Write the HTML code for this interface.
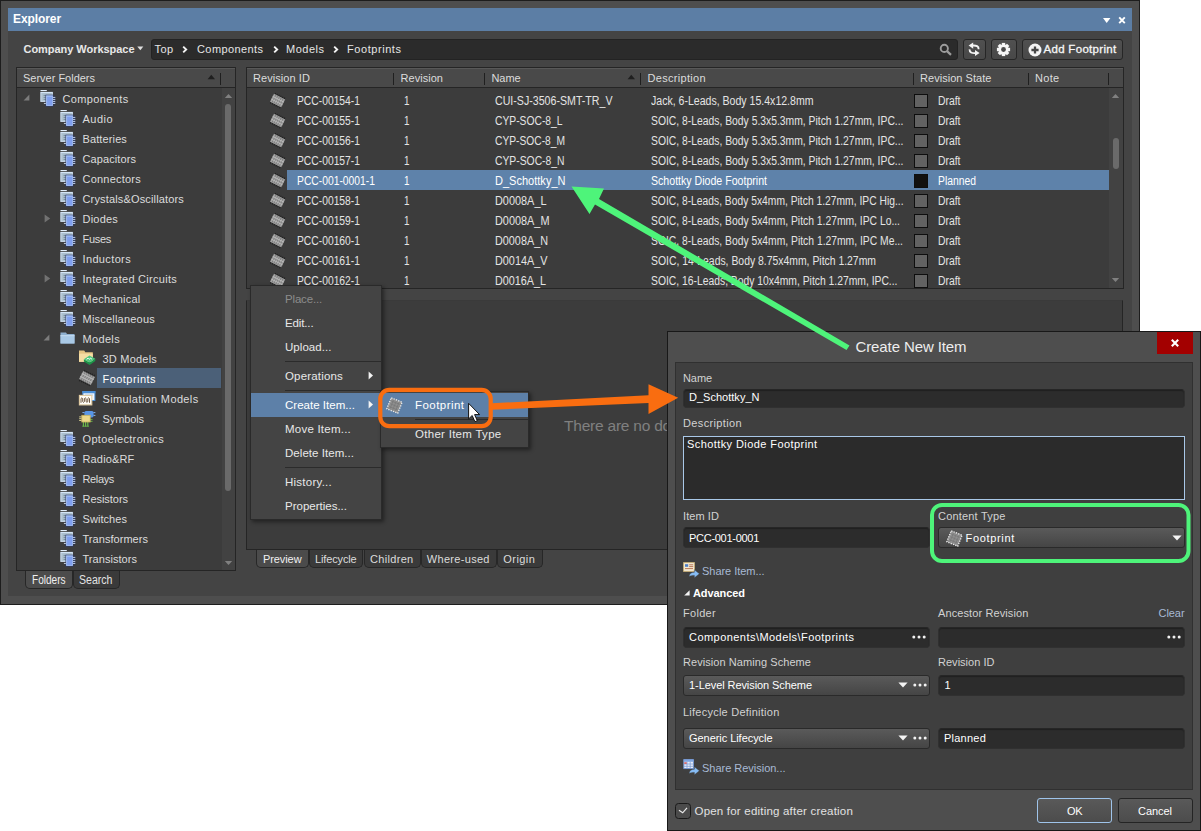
<!DOCTYPE html>
<html><head><meta charset="utf-8"><title>Explorer</title>
<style>
html,body{margin:0;padding:0;background:#fff;}
body{width:1201px;height:831px;position:relative;overflow:hidden;font-family:"Liberation Sans",sans-serif;font-size:12px;}
div{position:absolute;box-sizing:border-box;}
svg{position:absolute;overflow:visible;}
.t{white-space:nowrap;}
</style></head><body>
<div style="left:0px;top:0px;width:1140px;height:605px;background:#4e4e4e;border:1px solid #1d1d1d;"></div>
<div style="left:8px;top:8px;width:1124px;height:588px;background:#444444;"></div>
<div style="left:8px;top:8px;width:1124px;height:23px;background:#5c7ea5;"></div>
<div class="t" id="t1" style="left:13px;top:11px;line-height:16px;font-size:12px;color:#ffffff;font-weight:bold;letter-spacing:-0.086px;">Explorer</div>
<svg style="left:1101.5px;top:15.5px" width="26" height="10" viewBox="0 0 26 10"><path d="M1 2h7.4l-3.7 5z" fill="#fff"/><path d="M17.2 1.4l5.6 5.8M22.8 1.4l-5.6 5.8" stroke="#fff" stroke-width="1.9"/></svg>
<div class="t" id="t2" style="left:23.5px;top:41px;line-height:16px;font-size:11px;color:#e8e8e8;font-weight:bold;letter-spacing:-0.040px;">Company Workspace</div>
<svg style="left:137px;top:46px" width="7" height="5" viewBox="0 0 7 5"><path d="M0.3 0.6h6l-3 3.6z" fill="#e0e0e0"/></svg>
<div style="left:151px;top:39px;width:807px;height:21px;background:#2b2b2b;border:1px solid #232323;border-radius:3px;"></div>
<div class="t" id="t3" style="left:154.5px;top:41px;line-height:16px;font-size:11px;color:#e6e6e6;letter-spacing:0.417px;">Top</div>
<div class="t" id="t4" style="left:197px;top:41px;line-height:16px;font-size:11px;color:#e6e6e6;letter-spacing:0.412px;">Components</div>
<div class="t" id="t5" style="left:286px;top:41px;line-height:16px;font-size:11px;color:#e6e6e6;letter-spacing:0.505px;">Models</div>
<div class="t" id="t6" style="left:347px;top:41px;line-height:16px;font-size:11px;color:#e6e6e6;letter-spacing:0.558px;">Footprints</div>
<svg style="left:182px;top:45px" width="6" height="9" viewBox="0 0 6 9"><path d="M1.2 1.6l3 2.9l-3 2.9" fill="none" stroke="#f4f4f4" stroke-width="1.9"/></svg>
<svg style="left:272.5px;top:45px" width="6" height="9" viewBox="0 0 6 9"><path d="M1.2 1.6l3 2.9l-3 2.9" fill="none" stroke="#f4f4f4" stroke-width="1.9"/></svg>
<svg style="left:332.5px;top:45px" width="6" height="9" viewBox="0 0 6 9"><path d="M1.2 1.6l3 2.9l-3 2.9" fill="none" stroke="#f4f4f4" stroke-width="1.9"/></svg>
<svg style="left:939px;top:43px" width="14" height="14" viewBox="939 43 14 14"><circle cx="944.3" cy="48.4" r="3.6" fill="none" stroke="#9c9c9c" stroke-width="1.9"/><path d="M947 51.2l4 3.6" stroke="#9c9c9c" stroke-width="2.3"/></svg>
<div style="left:962.5px;top:39px;width:23px;height:21px;background:linear-gradient(#505050,#484848);border:1px solid #262626;border-radius:3px;"></div>
<div style="left:990.5px;top:39px;width:26.5px;height:21px;background:linear-gradient(#505050,#484848);border:1px solid #262626;border-radius:3px;"></div>
<div style="left:1021.5px;top:39px;width:101.5px;height:21px;background:linear-gradient(#505050,#484848);border:1px solid #262626;border-radius:3px;"></div>
<svg style="left:966px;top:41px" width="16" height="16" viewBox="966 41 16 16"><path d="M978.6 49.2C978.8 46.3 976.4 45.2 972.6 45.5" fill="none" stroke="#f4f4f4" stroke-width="1.9"/><path d="M968.6 45.6l4.6-3.1v6.2z" fill="#f4f4f4"/><path d="M969.6 49.4C969.4 52.3 971.8 53.4 975.6 53.1" fill="none" stroke="#f4f4f4" stroke-width="1.9"/><path d="M979.6 53l-4.6-3.1v6.2z" fill="#f4f4f4"/></svg>
<svg style="left:996px;top:42px" width="15" height="15" viewBox="-7.5 -7.5 15 15"><g fill="#f6f6f6"><circle r="5.2"/><rect x="-1.7" y="-6.6" width="3.4" height="13.2" transform="rotate(0)"/><rect x="-1.7" y="-6.6" width="3.4" height="13.2" transform="rotate(45)"/><rect x="-1.7" y="-6.6" width="3.4" height="13.2" transform="rotate(90)"/><rect x="-1.7" y="-6.6" width="3.4" height="13.2" transform="rotate(135)"/></g><circle r="2.4" fill="#4a4a4a"/></svg>
<svg style="left:1027.5px;top:42.5px" width="14" height="14" viewBox="0 0 14 14"><circle cx="7" cy="7" r="6.5" fill="#f4f4f4"/><path d="M7 3.4v7.2M3.4 7h7.2" stroke="#474747" stroke-width="2.3"/></svg>
<div class="t" id="t7" style="left:1043.5px;top:41px;line-height:16px;font-size:11.5px;color:#f6f6f6;letter-spacing:0.304px;-webkit-text-stroke:0.3px #f6f6f6;">Add Footprint</div>
<div style="left:16px;top:67px;width:220px;height:504px;background:#3c3c3c;border:1px solid #252525;"></div>
<div style="left:17px;top:68px;width:218px;height:20px;background:#494949;border-bottom:1px solid #252525;border-top:1px solid #585858;"></div>
<div style="left:222px;top:88px;width:13px;height:482px;background:#424242;"></div>
<div class="t" id="t8" style="left:23px;top:70px;line-height:16px;font-size:11px;color:#dcdcdc;letter-spacing:-0.010px;">Server Folders</div>
<svg style="left:207px;top:74px" width="9" height="6" viewBox="0 0 9 6"><path d="M0.6 5.2h7.4l-3.7-4.4z" fill="#1f1f1f"/></svg>
<div style="left:220px;top:72.5px;width:1px;height:12px;background:#1f1f1f;"></div>
<div style="left:225px;top:104px;width:6px;height:387px;background:#6a6a6a;border-radius:3px;"></div>
<svg style="left:224px;top:93px" width="9" height="6" viewBox="0 0 9 6"><path d="M0.8 5h7.4l-3.7-4z" fill="#808080"/></svg>
<svg style="left:224px;top:560px" width="9" height="6" viewBox="0 0 9 6"><path d="M0.8 1h7.4l-3.7 4z" fill="#808080"/></svg>
<div style="left:97px;top:368px;width:124px;height:20px;background:#4b6078;"></div>
<svg style="left:23.2px;top:93.8px" width="7" height="7" viewBox="0 0 7 7"><path d="M6.4 0.6v5.8h-5.8z" fill="#7c7c7c"/></svg>
<svg style="left:40px;top:90px" width="16" height="17" viewBox="0 0 16 17"><path d="M0.5 0h6.3v1.1h-6.3z" fill="#e2eefb"/><path d="M0.3 1.9h12.6v10h-12.6z" fill="#d3e4f6"/><rect x="1.3" y="3" width="10.6" height="7.9" fill="#adc1cf"/><path d="M3.6 5.4h2.2M3.6 7.4h2.2M3.6 9.4h2.2" stroke="#6f8394" stroke-width="0.9"/><rect x="5.5" y="4.7" width="7.9" height="11.8" fill="#2c3a6a"/><rect x="12.9" y="6.4" width="2.3" height="8" fill="#27335c"/><path d="M13 7.4h2.3M13 9.4h2.3M13 11.4h2.3M13 13.4h2.3M3.9 13.4h2" stroke="#d5e2f6" stroke-width="0.9"/><rect x="6.1" y="5.3" width="6.8" height="10.6" fill="#a9c5f8"/><rect x="7.1" y="6.6" width="5" height="8.5" fill="#7f9fee"/></svg>
<div class="t" id="t9" style="left:62.5px;top:91px;line-height:16px;font-size:11px;color:#dcdcdc;letter-spacing:0.362px;">Components</div>
<svg style="left:60px;top:110px" width="16" height="17" viewBox="0 0 16 17"><path d="M0.5 0h6.3v1.1h-6.3z" fill="#e2eefb"/><path d="M0.3 1.9h12.6v10h-12.6z" fill="#d3e4f6"/><rect x="1.3" y="3" width="10.6" height="7.9" fill="#adc1cf"/><path d="M3.6 5.4h2.2M3.6 7.4h2.2M3.6 9.4h2.2" stroke="#6f8394" stroke-width="0.9"/><rect x="5.5" y="4.7" width="7.9" height="11.8" fill="#2c3a6a"/><rect x="12.9" y="6.4" width="2.3" height="8" fill="#27335c"/><path d="M13 7.4h2.3M13 9.4h2.3M13 11.4h2.3M13 13.4h2.3M3.9 13.4h2" stroke="#d5e2f6" stroke-width="0.9"/><rect x="6.1" y="5.3" width="6.8" height="10.6" fill="#a9c5f8"/><rect x="7.1" y="6.6" width="5" height="8.5" fill="#7f9fee"/></svg>
<div class="t" id="t10" style="left:82.5px;top:111px;line-height:16px;font-size:11px;color:#dcdcdc;letter-spacing:0.472px;">Audio</div>
<svg style="left:60px;top:130px" width="16" height="17" viewBox="0 0 16 17"><path d="M0.5 0h6.3v1.1h-6.3z" fill="#e2eefb"/><path d="M0.3 1.9h12.6v10h-12.6z" fill="#d3e4f6"/><rect x="1.3" y="3" width="10.6" height="7.9" fill="#adc1cf"/><path d="M3.6 5.4h2.2M3.6 7.4h2.2M3.6 9.4h2.2" stroke="#6f8394" stroke-width="0.9"/><rect x="5.5" y="4.7" width="7.9" height="11.8" fill="#2c3a6a"/><rect x="12.9" y="6.4" width="2.3" height="8" fill="#27335c"/><path d="M13 7.4h2.3M13 9.4h2.3M13 11.4h2.3M13 13.4h2.3M3.9 13.4h2" stroke="#d5e2f6" stroke-width="0.9"/><rect x="6.1" y="5.3" width="6.8" height="10.6" fill="#a9c5f8"/><rect x="7.1" y="6.6" width="5" height="8.5" fill="#7f9fee"/></svg>
<div class="t" id="t11" style="left:82.5px;top:131px;line-height:16px;font-size:11px;color:#dcdcdc;letter-spacing:0.120px;">Batteries</div>
<svg style="left:60px;top:150px" width="16" height="17" viewBox="0 0 16 17"><path d="M0.5 0h6.3v1.1h-6.3z" fill="#e2eefb"/><path d="M0.3 1.9h12.6v10h-12.6z" fill="#d3e4f6"/><rect x="1.3" y="3" width="10.6" height="7.9" fill="#adc1cf"/><path d="M3.6 5.4h2.2M3.6 7.4h2.2M3.6 9.4h2.2" stroke="#6f8394" stroke-width="0.9"/><rect x="5.5" y="4.7" width="7.9" height="11.8" fill="#2c3a6a"/><rect x="12.9" y="6.4" width="2.3" height="8" fill="#27335c"/><path d="M13 7.4h2.3M13 9.4h2.3M13 11.4h2.3M13 13.4h2.3M3.9 13.4h2" stroke="#d5e2f6" stroke-width="0.9"/><rect x="6.1" y="5.3" width="6.8" height="10.6" fill="#a9c5f8"/><rect x="7.1" y="6.6" width="5" height="8.5" fill="#7f9fee"/></svg>
<div class="t" id="t12" style="left:82.5px;top:151px;line-height:16px;font-size:11px;color:#dcdcdc;letter-spacing:0.092px;">Capacitors</div>
<svg style="left:60px;top:170px" width="16" height="17" viewBox="0 0 16 17"><path d="M0.5 0h6.3v1.1h-6.3z" fill="#e2eefb"/><path d="M0.3 1.9h12.6v10h-12.6z" fill="#d3e4f6"/><rect x="1.3" y="3" width="10.6" height="7.9" fill="#adc1cf"/><path d="M3.6 5.4h2.2M3.6 7.4h2.2M3.6 9.4h2.2" stroke="#6f8394" stroke-width="0.9"/><rect x="5.5" y="4.7" width="7.9" height="11.8" fill="#2c3a6a"/><rect x="12.9" y="6.4" width="2.3" height="8" fill="#27335c"/><path d="M13 7.4h2.3M13 9.4h2.3M13 11.4h2.3M13 13.4h2.3M3.9 13.4h2" stroke="#d5e2f6" stroke-width="0.9"/><rect x="6.1" y="5.3" width="6.8" height="10.6" fill="#a9c5f8"/><rect x="7.1" y="6.6" width="5" height="8.5" fill="#7f9fee"/></svg>
<div class="t" id="t13" style="left:82.5px;top:171px;line-height:16px;font-size:11px;color:#dcdcdc;letter-spacing:0.223px;">Connectors</div>
<svg style="left:60px;top:190px" width="16" height="17" viewBox="0 0 16 17"><path d="M0.5 0h6.3v1.1h-6.3z" fill="#e2eefb"/><path d="M0.3 1.9h12.6v10h-12.6z" fill="#d3e4f6"/><rect x="1.3" y="3" width="10.6" height="7.9" fill="#adc1cf"/><path d="M3.6 5.4h2.2M3.6 7.4h2.2M3.6 9.4h2.2" stroke="#6f8394" stroke-width="0.9"/><rect x="5.5" y="4.7" width="7.9" height="11.8" fill="#2c3a6a"/><rect x="12.9" y="6.4" width="2.3" height="8" fill="#27335c"/><path d="M13 7.4h2.3M13 9.4h2.3M13 11.4h2.3M13 13.4h2.3M3.9 13.4h2" stroke="#d5e2f6" stroke-width="0.9"/><rect x="6.1" y="5.3" width="6.8" height="10.6" fill="#a9c5f8"/><rect x="7.1" y="6.6" width="5" height="8.5" fill="#7f9fee"/></svg>
<div class="t" id="t14" style="left:82.5px;top:191px;line-height:16px;font-size:11px;color:#dcdcdc;letter-spacing:0.155px;">Crystals&amp;Oscillators</div>
<svg style="left:43.5px;top:214px" width="7" height="9" viewBox="0 0 7 9"><path d="M0.6 0.5l5.6 4l-5.6 4z" fill="#717171"/></svg>
<svg style="left:60px;top:210px" width="16" height="17" viewBox="0 0 16 17"><path d="M0.5 0h6.3v1.1h-6.3z" fill="#e2eefb"/><path d="M0.3 1.9h12.6v10h-12.6z" fill="#d3e4f6"/><rect x="1.3" y="3" width="10.6" height="7.9" fill="#adc1cf"/><path d="M3.6 5.4h2.2M3.6 7.4h2.2M3.6 9.4h2.2" stroke="#6f8394" stroke-width="0.9"/><rect x="5.5" y="4.7" width="7.9" height="11.8" fill="#2c3a6a"/><rect x="12.9" y="6.4" width="2.3" height="8" fill="#27335c"/><path d="M13 7.4h2.3M13 9.4h2.3M13 11.4h2.3M13 13.4h2.3M3.9 13.4h2" stroke="#d5e2f6" stroke-width="0.9"/><rect x="6.1" y="5.3" width="6.8" height="10.6" fill="#a9c5f8"/><rect x="7.1" y="6.6" width="5" height="8.5" fill="#7f9fee"/></svg>
<div class="t" id="t15" style="left:82.5px;top:211px;line-height:16px;font-size:11px;color:#dcdcdc;letter-spacing:0.208px;">Diodes</div>
<svg style="left:60px;top:230px" width="16" height="17" viewBox="0 0 16 17"><path d="M0.5 0h6.3v1.1h-6.3z" fill="#e2eefb"/><path d="M0.3 1.9h12.6v10h-12.6z" fill="#d3e4f6"/><rect x="1.3" y="3" width="10.6" height="7.9" fill="#adc1cf"/><path d="M3.6 5.4h2.2M3.6 7.4h2.2M3.6 9.4h2.2" stroke="#6f8394" stroke-width="0.9"/><rect x="5.5" y="4.7" width="7.9" height="11.8" fill="#2c3a6a"/><rect x="12.9" y="6.4" width="2.3" height="8" fill="#27335c"/><path d="M13 7.4h2.3M13 9.4h2.3M13 11.4h2.3M13 13.4h2.3M3.9 13.4h2" stroke="#d5e2f6" stroke-width="0.9"/><rect x="6.1" y="5.3" width="6.8" height="10.6" fill="#a9c5f8"/><rect x="7.1" y="6.6" width="5" height="8.5" fill="#7f9fee"/></svg>
<div class="t" id="t16" style="left:82.5px;top:231px;line-height:16px;font-size:11px;color:#dcdcdc;letter-spacing:-0.294px;">Fuses</div>
<svg style="left:60px;top:250px" width="16" height="17" viewBox="0 0 16 17"><path d="M0.5 0h6.3v1.1h-6.3z" fill="#e2eefb"/><path d="M0.3 1.9h12.6v10h-12.6z" fill="#d3e4f6"/><rect x="1.3" y="3" width="10.6" height="7.9" fill="#adc1cf"/><path d="M3.6 5.4h2.2M3.6 7.4h2.2M3.6 9.4h2.2" stroke="#6f8394" stroke-width="0.9"/><rect x="5.5" y="4.7" width="7.9" height="11.8" fill="#2c3a6a"/><rect x="12.9" y="6.4" width="2.3" height="8" fill="#27335c"/><path d="M13 7.4h2.3M13 9.4h2.3M13 11.4h2.3M13 13.4h2.3M3.9 13.4h2" stroke="#d5e2f6" stroke-width="0.9"/><rect x="6.1" y="5.3" width="6.8" height="10.6" fill="#a9c5f8"/><rect x="7.1" y="6.6" width="5" height="8.5" fill="#7f9fee"/></svg>
<div class="t" id="t17" style="left:82.5px;top:251px;line-height:16px;font-size:11px;color:#dcdcdc;letter-spacing:0.361px;">Inductors</div>
<svg style="left:43.5px;top:274px" width="7" height="9" viewBox="0 0 7 9"><path d="M0.6 0.5l5.6 4l-5.6 4z" fill="#717171"/></svg>
<svg style="left:60px;top:270px" width="16" height="17" viewBox="0 0 16 17"><path d="M0.5 0h6.3v1.1h-6.3z" fill="#e2eefb"/><path d="M0.3 1.9h12.6v10h-12.6z" fill="#d3e4f6"/><rect x="1.3" y="3" width="10.6" height="7.9" fill="#adc1cf"/><path d="M3.6 5.4h2.2M3.6 7.4h2.2M3.6 9.4h2.2" stroke="#6f8394" stroke-width="0.9"/><rect x="5.5" y="4.7" width="7.9" height="11.8" fill="#2c3a6a"/><rect x="12.9" y="6.4" width="2.3" height="8" fill="#27335c"/><path d="M13 7.4h2.3M13 9.4h2.3M13 11.4h2.3M13 13.4h2.3M3.9 13.4h2" stroke="#d5e2f6" stroke-width="0.9"/><rect x="6.1" y="5.3" width="6.8" height="10.6" fill="#a9c5f8"/><rect x="7.1" y="6.6" width="5" height="8.5" fill="#7f9fee"/></svg>
<div class="t" id="t18" style="left:82.5px;top:271px;line-height:16px;font-size:11px;color:#dcdcdc;letter-spacing:0.275px;">Integrated Circuits</div>
<svg style="left:60px;top:290px" width="16" height="17" viewBox="0 0 16 17"><path d="M0.5 0h6.3v1.1h-6.3z" fill="#e2eefb"/><path d="M0.3 1.9h12.6v10h-12.6z" fill="#d3e4f6"/><rect x="1.3" y="3" width="10.6" height="7.9" fill="#adc1cf"/><path d="M3.6 5.4h2.2M3.6 7.4h2.2M3.6 9.4h2.2" stroke="#6f8394" stroke-width="0.9"/><rect x="5.5" y="4.7" width="7.9" height="11.8" fill="#2c3a6a"/><rect x="12.9" y="6.4" width="2.3" height="8" fill="#27335c"/><path d="M13 7.4h2.3M13 9.4h2.3M13 11.4h2.3M13 13.4h2.3M3.9 13.4h2" stroke="#d5e2f6" stroke-width="0.9"/><rect x="6.1" y="5.3" width="6.8" height="10.6" fill="#a9c5f8"/><rect x="7.1" y="6.6" width="5" height="8.5" fill="#7f9fee"/></svg>
<div class="t" id="t19" style="left:82.5px;top:291px;line-height:16px;font-size:11px;color:#dcdcdc;letter-spacing:0.236px;">Mechanical</div>
<svg style="left:60px;top:310px" width="16" height="17" viewBox="0 0 16 17"><path d="M0.5 0h6.3v1.1h-6.3z" fill="#e2eefb"/><path d="M0.3 1.9h12.6v10h-12.6z" fill="#d3e4f6"/><rect x="1.3" y="3" width="10.6" height="7.9" fill="#adc1cf"/><path d="M3.6 5.4h2.2M3.6 7.4h2.2M3.6 9.4h2.2" stroke="#6f8394" stroke-width="0.9"/><rect x="5.5" y="4.7" width="7.9" height="11.8" fill="#2c3a6a"/><rect x="12.9" y="6.4" width="2.3" height="8" fill="#27335c"/><path d="M13 7.4h2.3M13 9.4h2.3M13 11.4h2.3M13 13.4h2.3M3.9 13.4h2" stroke="#d5e2f6" stroke-width="0.9"/><rect x="6.1" y="5.3" width="6.8" height="10.6" fill="#a9c5f8"/><rect x="7.1" y="6.6" width="5" height="8.5" fill="#7f9fee"/></svg>
<div class="t" id="t20" style="left:82.5px;top:311px;line-height:16px;font-size:11px;color:#dcdcdc;letter-spacing:0.215px;">Miscellaneous</div>
<svg style="left:43.2px;top:333.8px" width="7" height="7" viewBox="0 0 7 7"><path d="M6.4 0.6v5.8h-5.8z" fill="#7c7c7c"/></svg>
<svg style="left:60px;top:330px" width="16" height="17" viewBox="0 0 16 17"><path d="M0.5 2.5h5.5l1 1.5h7.5v9.5h-14z" fill="#8fb0cf"/><path d="M0.5 5.2h14v8.3h-14z" fill="#a9c9e6"/><path d="M0.5 5.2h14v1h-14z" fill="#c6dcf0"/></svg>
<div class="t" id="t21" style="left:82.5px;top:331px;line-height:16px;font-size:11px;color:#dcdcdc;letter-spacing:0.339px;">Models</div>
<svg style="left:79px;top:350px" width="18" height="16" viewBox="0 0 18 16"><path d="M0 0.6h5.2l1.1 1.7h7.5v9.5h-13.8z" fill="#e6c584"/><path d="M0 3.6h13.8v8.2h-13.8z" fill="#f5dda4"/><path d="M4.9 9.2L10.6 12.6L16.3 8.8v2.3L10.6 15L4.9 11.4z" fill="#1c9448"/><path d="M4.9 9.2L10.5 5.5L16.3 8.8L10.6 12.6z" fill="#4fc67e"/><path d="M7.6 9.3l1.5-1.1l1.1 1.1l1.5-1.1l1.2 1" fill="none" stroke="#fff" stroke-width="1"/></svg>
<div class="t" id="t22" style="left:102.5px;top:351px;line-height:16px;font-size:11px;color:#dcdcdc;letter-spacing:0.214px;">3D Models</div>
<svg style="left:79.3px;top:370px" width="16" height="16" viewBox="0 0 16 16"><g transform="rotate(27 8 8)"><path d="M2.6 1.7v12.6M4.8 1.7v12.6M6.9 1.7v12.6M9.1 1.7v12.6M11.2 1.7v12.6M13.4 1.7v12.6" stroke="#222" stroke-width="1.1"/><rect x="1.4" y="3.4" width="13.2" height="9.2" fill="#a2a2a2"/><path d="M3.7 3.6v8.8M5.85 3.6v8.8M8 3.6v8.8M10.15 3.6v8.8M12.3 3.6v8.8" stroke="#7c7c7c" stroke-width="0.9"/><path d="M1.4 6.4h13.2M1.4 9.6h13.2" stroke="#bdbdbd" stroke-width="0.9"/></g></svg>
<div class="t" id="t23" style="left:102.5px;top:371px;line-height:16px;font-size:11px;color:#ffffff;letter-spacing:0.458px;">Footprints</div>
<svg style="left:79px;top:391px" width="18" height="16" viewBox="0 0 18 16"><rect x="3.9" y="0.5" width="12" height="9" fill="#f2f7fd" stroke="#4a8fd8" stroke-width="1"/><rect x="3.4" y="0" width="13" height="2.3" fill="#4a8fd8"/><path d="M6 4h8" stroke="#9cc2ec" stroke-width="0.9"/><rect x="0.4" y="4.4" width="12.4" height="9.5" fill="#fffdf7" stroke="#e2cca2" stroke-width="1.1"/><path d="M2 11.8V7.6q0.85-1.5 1.7 0V10.6q0.85 1.5 1.7 0V7.6q0.85-1.5 1.7 0V10.6q0.85 1.5 1.7 0V7.6q0.85-1.5 1.7 0V11.8" fill="none" stroke="#4e3218" stroke-width="0.8"/></svg>
<div class="t" id="t24" style="left:102.5px;top:391px;line-height:16px;font-size:11px;color:#dcdcdc;letter-spacing:0.360px;">Simulation Models</div>
<svg style="left:79px;top:410.5px" width="18" height="17" viewBox="0 0 18 17"><path d="M3.4 1.6h2.2M14.4 1.6h2M14.4 4.4h2" stroke="#86b4ee" stroke-width="1"/><rect x="5.4" y="0" width="9.2" height="6.4" rx="1.6" fill="#5896e6"/><path d="M0.2 5.9h2.6M0.2 7.7h2.6M0.2 9.5h2.6" stroke="#e6dc9a" stroke-width="0.9"/><path d="M11.2 8.4h2.3M11.2 10.3h2.3" stroke="#6cc04a" stroke-width="0.9"/><path d="M4.4 11v4.4M6.6 11v4.4M8.8 11v4.4" stroke="#6cc04a" stroke-width="1.1"/><path d="M3.2 15.2h6.8" stroke="#6cc04a" stroke-width="0.8"/><rect x="2.8" y="4.3" width="8.4" height="6.7" fill="#ecd98a" stroke="#c8b25a" stroke-width="0.8"/></svg>
<div class="t" id="t25" style="left:102.5px;top:411px;line-height:16px;font-size:11px;color:#dcdcdc;letter-spacing:-0.098px;">Symbols</div>
<svg style="left:60px;top:430px" width="16" height="17" viewBox="0 0 16 17"><path d="M0.5 0h6.3v1.1h-6.3z" fill="#e2eefb"/><path d="M0.3 1.9h12.6v10h-12.6z" fill="#d3e4f6"/><rect x="1.3" y="3" width="10.6" height="7.9" fill="#adc1cf"/><path d="M3.6 5.4h2.2M3.6 7.4h2.2M3.6 9.4h2.2" stroke="#6f8394" stroke-width="0.9"/><rect x="5.5" y="4.7" width="7.9" height="11.8" fill="#2c3a6a"/><rect x="12.9" y="6.4" width="2.3" height="8" fill="#27335c"/><path d="M13 7.4h2.3M13 9.4h2.3M13 11.4h2.3M13 13.4h2.3M3.9 13.4h2" stroke="#d5e2f6" stroke-width="0.9"/><rect x="6.1" y="5.3" width="6.8" height="10.6" fill="#a9c5f8"/><rect x="7.1" y="6.6" width="5" height="8.5" fill="#7f9fee"/></svg>
<div class="t" id="t26" style="left:82.5px;top:431px;line-height:16px;font-size:11px;color:#dcdcdc;letter-spacing:0.338px;">Optoelectronics</div>
<svg style="left:60px;top:450px" width="16" height="17" viewBox="0 0 16 17"><path d="M0.5 0h6.3v1.1h-6.3z" fill="#e2eefb"/><path d="M0.3 1.9h12.6v10h-12.6z" fill="#d3e4f6"/><rect x="1.3" y="3" width="10.6" height="7.9" fill="#adc1cf"/><path d="M3.6 5.4h2.2M3.6 7.4h2.2M3.6 9.4h2.2" stroke="#6f8394" stroke-width="0.9"/><rect x="5.5" y="4.7" width="7.9" height="11.8" fill="#2c3a6a"/><rect x="12.9" y="6.4" width="2.3" height="8" fill="#27335c"/><path d="M13 7.4h2.3M13 9.4h2.3M13 11.4h2.3M13 13.4h2.3M3.9 13.4h2" stroke="#d5e2f6" stroke-width="0.9"/><rect x="6.1" y="5.3" width="6.8" height="10.6" fill="#a9c5f8"/><rect x="7.1" y="6.6" width="5" height="8.5" fill="#7f9fee"/></svg>
<div class="t" id="t27" style="left:82.5px;top:451px;line-height:16px;font-size:11px;color:#dcdcdc;letter-spacing:0.156px;">Radio&amp;RF</div>
<svg style="left:60px;top:470px" width="16" height="17" viewBox="0 0 16 17"><path d="M0.5 0h6.3v1.1h-6.3z" fill="#e2eefb"/><path d="M0.3 1.9h12.6v10h-12.6z" fill="#d3e4f6"/><rect x="1.3" y="3" width="10.6" height="7.9" fill="#adc1cf"/><path d="M3.6 5.4h2.2M3.6 7.4h2.2M3.6 9.4h2.2" stroke="#6f8394" stroke-width="0.9"/><rect x="5.5" y="4.7" width="7.9" height="11.8" fill="#2c3a6a"/><rect x="12.9" y="6.4" width="2.3" height="8" fill="#27335c"/><path d="M13 7.4h2.3M13 9.4h2.3M13 11.4h2.3M13 13.4h2.3M3.9 13.4h2" stroke="#d5e2f6" stroke-width="0.9"/><rect x="6.1" y="5.3" width="6.8" height="10.6" fill="#a9c5f8"/><rect x="7.1" y="6.6" width="5" height="8.5" fill="#7f9fee"/></svg>
<div class="t" id="t28" style="left:82.5px;top:471px;line-height:16px;font-size:11px;color:#dcdcdc;letter-spacing:-0.354px;">Relays</div>
<svg style="left:60px;top:490px" width="16" height="17" viewBox="0 0 16 17"><path d="M0.5 0h6.3v1.1h-6.3z" fill="#e2eefb"/><path d="M0.3 1.9h12.6v10h-12.6z" fill="#d3e4f6"/><rect x="1.3" y="3" width="10.6" height="7.9" fill="#adc1cf"/><path d="M3.6 5.4h2.2M3.6 7.4h2.2M3.6 9.4h2.2" stroke="#6f8394" stroke-width="0.9"/><rect x="5.5" y="4.7" width="7.9" height="11.8" fill="#2c3a6a"/><rect x="12.9" y="6.4" width="2.3" height="8" fill="#27335c"/><path d="M13 7.4h2.3M13 9.4h2.3M13 11.4h2.3M13 13.4h2.3M3.9 13.4h2" stroke="#d5e2f6" stroke-width="0.9"/><rect x="6.1" y="5.3" width="6.8" height="10.6" fill="#a9c5f8"/><rect x="7.1" y="6.6" width="5" height="8.5" fill="#7f9fee"/></svg>
<div class="t" id="t29" style="left:82.5px;top:491px;line-height:16px;font-size:11px;color:#dcdcdc;letter-spacing:-0.038px;">Resistors</div>
<svg style="left:60px;top:510px" width="16" height="17" viewBox="0 0 16 17"><path d="M0.5 0h6.3v1.1h-6.3z" fill="#e2eefb"/><path d="M0.3 1.9h12.6v10h-12.6z" fill="#d3e4f6"/><rect x="1.3" y="3" width="10.6" height="7.9" fill="#adc1cf"/><path d="M3.6 5.4h2.2M3.6 7.4h2.2M3.6 9.4h2.2" stroke="#6f8394" stroke-width="0.9"/><rect x="5.5" y="4.7" width="7.9" height="11.8" fill="#2c3a6a"/><rect x="12.9" y="6.4" width="2.3" height="8" fill="#27335c"/><path d="M13 7.4h2.3M13 9.4h2.3M13 11.4h2.3M13 13.4h2.3M3.9 13.4h2" stroke="#d5e2f6" stroke-width="0.9"/><rect x="6.1" y="5.3" width="6.8" height="10.6" fill="#a9c5f8"/><rect x="7.1" y="6.6" width="5" height="8.5" fill="#7f9fee"/></svg>
<div class="t" id="t30" style="left:82.5px;top:511px;line-height:16px;font-size:11px;color:#dcdcdc;letter-spacing:0.059px;">Switches</div>
<svg style="left:60px;top:530px" width="16" height="17" viewBox="0 0 16 17"><path d="M0.5 0h6.3v1.1h-6.3z" fill="#e2eefb"/><path d="M0.3 1.9h12.6v10h-12.6z" fill="#d3e4f6"/><rect x="1.3" y="3" width="10.6" height="7.9" fill="#adc1cf"/><path d="M3.6 5.4h2.2M3.6 7.4h2.2M3.6 9.4h2.2" stroke="#6f8394" stroke-width="0.9"/><rect x="5.5" y="4.7" width="7.9" height="11.8" fill="#2c3a6a"/><rect x="12.9" y="6.4" width="2.3" height="8" fill="#27335c"/><path d="M13 7.4h2.3M13 9.4h2.3M13 11.4h2.3M13 13.4h2.3M3.9 13.4h2" stroke="#d5e2f6" stroke-width="0.9"/><rect x="6.1" y="5.3" width="6.8" height="10.6" fill="#a9c5f8"/><rect x="7.1" y="6.6" width="5" height="8.5" fill="#7f9fee"/></svg>
<div class="t" id="t31" style="left:82.5px;top:531px;line-height:16px;font-size:11px;color:#dcdcdc;letter-spacing:0.042px;">Transformers</div>
<svg style="left:60px;top:550px" width="16" height="17" viewBox="0 0 16 17"><path d="M0.5 0h6.3v1.1h-6.3z" fill="#e2eefb"/><path d="M0.3 1.9h12.6v10h-12.6z" fill="#d3e4f6"/><rect x="1.3" y="3" width="10.6" height="7.9" fill="#adc1cf"/><path d="M3.6 5.4h2.2M3.6 7.4h2.2M3.6 9.4h2.2" stroke="#6f8394" stroke-width="0.9"/><rect x="5.5" y="4.7" width="7.9" height="11.8" fill="#2c3a6a"/><rect x="12.9" y="6.4" width="2.3" height="8" fill="#27335c"/><path d="M13 7.4h2.3M13 9.4h2.3M13 11.4h2.3M13 13.4h2.3M3.9 13.4h2" stroke="#d5e2f6" stroke-width="0.9"/><rect x="6.1" y="5.3" width="6.8" height="10.6" fill="#a9c5f8"/><rect x="7.1" y="6.6" width="5" height="8.5" fill="#7f9fee"/></svg>
<div class="t" id="t32" style="left:82.5px;top:551px;line-height:16px;font-size:11px;color:#dcdcdc;letter-spacing:0.045px;">Transistors</div>
<div style="left:25px;top:571px;width:47.5px;height:17.5px;background:#4c4c4c;border:1px solid #272727;border-top:none;border-radius:0 0 5px 5px;"></div>
<div style="left:73px;top:571px;width:47px;height:17.5px;background:#3a3a3a;border:1px solid #272727;border-top:none;border-radius:0 0 5px 5px;"></div>
<div class="t" id="t33" style="left:32px;top:572px;line-height:16px;font-size:12px;color:#f0f0f0;transform:scaleX(0.8372);transform-origin:0 50%;">Folders</div>
<div class="t" id="t34" style="left:79px;top:572px;line-height:16px;font-size:12px;color:#e2e2e2;transform:scaleX(0.8809);transform-origin:0 50%;">Search</div>
<div style="left:246px;top:67px;width:878px;height:222px;background:#3c3c3c;border:1px solid #252525;"></div>
<div style="left:247px;top:68px;width:876px;height:20px;background:#494949;border-bottom:1px solid #252525;border-top:1px solid #585858;"></div>
<div class="t" id="t35" style="left:253px;top:70px;line-height:16px;font-size:11px;color:#dcdcdc;letter-spacing:0.068px;">Revision ID</div>
<div class="t" id="t36" style="left:400.5px;top:70px;line-height:16px;font-size:11px;color:#dcdcdc;letter-spacing:0.039px;">Revision</div>
<div class="t" id="t37" style="left:491.5px;top:70px;line-height:16px;font-size:11px;color:#dcdcdc;letter-spacing:-0.086px;">Name</div>
<div class="t" id="t38" style="left:647.5px;top:70px;line-height:16px;font-size:11px;color:#dcdcdc;letter-spacing:0.315px;">Description</div>
<div class="t" id="t39" style="left:920px;top:70px;line-height:16px;font-size:11px;color:#dcdcdc;letter-spacing:0.040px;">Revision State</div>
<div class="t" id="t40" style="left:1035px;top:70px;line-height:16px;font-size:11px;color:#dcdcdc;letter-spacing:0.312px;">Note</div>
<div style="left:393px;top:72.5px;width:1px;height:12px;background:#1f1f1f;"></div>
<div style="left:484px;top:72.5px;width:1px;height:12px;background:#1f1f1f;"></div>
<div style="left:640px;top:72.5px;width:1px;height:12px;background:#1f1f1f;"></div>
<div style="left:913px;top:72.5px;width:1px;height:12px;background:#1f1f1f;"></div>
<div style="left:1028px;top:72.5px;width:1px;height:12px;background:#1f1f1f;"></div>
<div style="left:1108px;top:72.5px;width:1px;height:12px;background:#1f1f1f;"></div>
<svg style="left:627px;top:74px" width="9" height="6" viewBox="0 0 9 6"><path d="M0.6 5.2h7.4l-3.7-4.4z" fill="#1f1f1f"/></svg>
<div style="left:287px;top:170px;width:822px;height:20px;background:#5e82aa;"></div>
<div style="left:1109px;top:88px;width:14px;height:200px;background:#424242;"></div>
<div style="left:1112.5px;top:138px;width:6px;height:31px;background:#6a6a6a;border-radius:3px;"></div>
<svg style="left:1111px;top:93px" width="9" height="6" viewBox="0 0 9 6"><path d="M0.8 5h7.4l-3.7-4z" fill="#808080"/></svg>
<svg style="left:1111px;top:277px" width="9" height="6" viewBox="0 0 9 6"><path d="M0.8 1h7.4l-3.7 4z" fill="#808080"/></svg>
<svg style="left:269.5px;top:92.5px" width="15.2" height="15.2" viewBox="0 0 16 16"><g transform="rotate(27 8 8)"><path d="M2.6 1.7v12.6M4.8 1.7v12.6M6.9 1.7v12.6M9.1 1.7v12.6M11.2 1.7v12.6M13.4 1.7v12.6" stroke="#222" stroke-width="1.1"/><rect x="1.4" y="3.4" width="13.2" height="9.2" fill="#a2a2a2"/><path d="M3.7 3.6v8.8M5.85 3.6v8.8M8 3.6v8.8M10.15 3.6v8.8M12.3 3.6v8.8" stroke="#7c7c7c" stroke-width="0.9"/><path d="M1.4 6.4h13.2M1.4 9.6h13.2" stroke="#bdbdbd" stroke-width="0.9"/></g></svg>
<div class="t" id="t41" style="left:297px;top:93px;line-height:16px;font-size:12px;color:#e4e4e4;transform:scaleX(0.8586);transform-origin:0 50%;">PCC-00154-1</div>
<div class="t" id="t42" style="left:404px;top:93px;line-height:16px;font-size:12px;color:#e4e4e4;transform:scaleX(0.8224);transform-origin:0 50%;">1</div>
<div class="t" id="t43" style="left:495px;top:93px;line-height:16px;font-size:12px;color:#e4e4e4;transform:scaleX(0.8854);transform-origin:0 50%;">CUI-SJ-3506-SMT-TR_V</div>
<div class="t" id="t44" style="left:651px;top:93px;line-height:16px;font-size:12px;color:#e4e4e4;transform:scaleX(0.8795);transform-origin:0 50%;">Jack, 6-Leads, Body 15.4x12.8mm</div>
<div style="left:914px;top:94px;width:14px;height:14px;background:#626262;border:1px solid #0e0e0e;"></div>
<div class="t" id="t45" style="left:938px;top:93px;line-height:16px;font-size:12px;color:#e4e4e4;transform:scaleX(0.8649);transform-origin:0 50%;">Draft</div>
<svg style="left:269.5px;top:112.5px" width="15.2" height="15.2" viewBox="0 0 16 16"><g transform="rotate(27 8 8)"><path d="M2.6 1.7v12.6M4.8 1.7v12.6M6.9 1.7v12.6M9.1 1.7v12.6M11.2 1.7v12.6M13.4 1.7v12.6" stroke="#222" stroke-width="1.1"/><rect x="1.4" y="3.4" width="13.2" height="9.2" fill="#a2a2a2"/><path d="M3.7 3.6v8.8M5.85 3.6v8.8M8 3.6v8.8M10.15 3.6v8.8M12.3 3.6v8.8" stroke="#7c7c7c" stroke-width="0.9"/><path d="M1.4 6.4h13.2M1.4 9.6h13.2" stroke="#bdbdbd" stroke-width="0.9"/></g></svg>
<div class="t" id="t46" style="left:297px;top:113px;line-height:16px;font-size:12px;color:#e4e4e4;transform:scaleX(0.8586);transform-origin:0 50%;">PCC-00155-1</div>
<div class="t" id="t47" style="left:404px;top:113px;line-height:16px;font-size:12px;color:#e4e4e4;transform:scaleX(0.8224);transform-origin:0 50%;">1</div>
<div class="t" id="t48" style="left:495px;top:113px;line-height:16px;font-size:12px;color:#e4e4e4;transform:scaleX(0.8577);transform-origin:0 50%;">CYP-SOC-8_L</div>
<div class="t" id="t49" style="left:651px;top:113px;line-height:16px;font-size:12px;color:#e4e4e4;transform:scaleX(0.8624);transform-origin:0 50%;">SOIC, 8-Leads, Body 5.3x5.3mm, Pitch 1.27mm, IPC...</div>
<div style="left:914px;top:114px;width:14px;height:14px;background:#626262;border:1px solid #0e0e0e;"></div>
<div class="t" id="t50" style="left:938px;top:113px;line-height:16px;font-size:12px;color:#e4e4e4;transform:scaleX(0.8649);transform-origin:0 50%;">Draft</div>
<svg style="left:269.5px;top:132.5px" width="15.2" height="15.2" viewBox="0 0 16 16"><g transform="rotate(27 8 8)"><path d="M2.6 1.7v12.6M4.8 1.7v12.6M6.9 1.7v12.6M9.1 1.7v12.6M11.2 1.7v12.6M13.4 1.7v12.6" stroke="#222" stroke-width="1.1"/><rect x="1.4" y="3.4" width="13.2" height="9.2" fill="#a2a2a2"/><path d="M3.7 3.6v8.8M5.85 3.6v8.8M8 3.6v8.8M10.15 3.6v8.8M12.3 3.6v8.8" stroke="#7c7c7c" stroke-width="0.9"/><path d="M1.4 6.4h13.2M1.4 9.6h13.2" stroke="#bdbdbd" stroke-width="0.9"/></g></svg>
<div class="t" id="t51" style="left:297px;top:133px;line-height:16px;font-size:12px;color:#e4e4e4;transform:scaleX(0.8586);transform-origin:0 50%;">PCC-00156-1</div>
<div class="t" id="t52" style="left:404px;top:133px;line-height:16px;font-size:12px;color:#e4e4e4;transform:scaleX(0.8224);transform-origin:0 50%;">1</div>
<div class="t" id="t53" style="left:495px;top:133px;line-height:16px;font-size:12px;color:#e4e4e4;transform:scaleX(0.8535);transform-origin:0 50%;">CYP-SOC-8_M</div>
<div class="t" id="t54" style="left:651px;top:133px;line-height:16px;font-size:12px;color:#e4e4e4;transform:scaleX(0.8624);transform-origin:0 50%;">SOIC, 8-Leads, Body 5.3x5.3mm, Pitch 1.27mm, IPC...</div>
<div style="left:914px;top:134px;width:14px;height:14px;background:#626262;border:1px solid #0e0e0e;"></div>
<div class="t" id="t55" style="left:938px;top:133px;line-height:16px;font-size:12px;color:#e4e4e4;transform:scaleX(0.8649);transform-origin:0 50%;">Draft</div>
<svg style="left:269.5px;top:152.5px" width="15.2" height="15.2" viewBox="0 0 16 16"><g transform="rotate(27 8 8)"><path d="M2.6 1.7v12.6M4.8 1.7v12.6M6.9 1.7v12.6M9.1 1.7v12.6M11.2 1.7v12.6M13.4 1.7v12.6" stroke="#222" stroke-width="1.1"/><rect x="1.4" y="3.4" width="13.2" height="9.2" fill="#a2a2a2"/><path d="M3.7 3.6v8.8M5.85 3.6v8.8M8 3.6v8.8M10.15 3.6v8.8M12.3 3.6v8.8" stroke="#7c7c7c" stroke-width="0.9"/><path d="M1.4 6.4h13.2M1.4 9.6h13.2" stroke="#bdbdbd" stroke-width="0.9"/></g></svg>
<div class="t" id="t56" style="left:297px;top:153px;line-height:16px;font-size:12px;color:#e4e4e4;transform:scaleX(0.8586);transform-origin:0 50%;">PCC-00157-1</div>
<div class="t" id="t57" style="left:404px;top:153px;line-height:16px;font-size:12px;color:#e4e4e4;transform:scaleX(0.8224);transform-origin:0 50%;">1</div>
<div class="t" id="t58" style="left:495px;top:153px;line-height:16px;font-size:12px;color:#e4e4e4;transform:scaleX(0.8613);transform-origin:0 50%;">CYP-SOC-8_N</div>
<div class="t" id="t59" style="left:651px;top:153px;line-height:16px;font-size:12px;color:#e4e4e4;transform:scaleX(0.8624);transform-origin:0 50%;">SOIC, 8-Leads, Body 5.3x5.3mm, Pitch 1.27mm, IPC...</div>
<div style="left:914px;top:154px;width:14px;height:14px;background:#626262;border:1px solid #0e0e0e;"></div>
<div class="t" id="t60" style="left:938px;top:153px;line-height:16px;font-size:12px;color:#e4e4e4;transform:scaleX(0.8649);transform-origin:0 50%;">Draft</div>
<svg style="left:269.5px;top:172.5px" width="15.2" height="15.2" viewBox="0 0 16 16"><g transform="rotate(27 8 8)"><path d="M2.6 1.7v12.6M4.8 1.7v12.6M6.9 1.7v12.6M9.1 1.7v12.6M11.2 1.7v12.6M13.4 1.7v12.6" stroke="#222" stroke-width="1.1"/><rect x="1.4" y="3.4" width="13.2" height="9.2" fill="#a2a2a2"/><path d="M3.7 3.6v8.8M5.85 3.6v8.8M8 3.6v8.8M10.15 3.6v8.8M12.3 3.6v8.8" stroke="#7c7c7c" stroke-width="0.9"/><path d="M1.4 6.4h13.2M1.4 9.6h13.2" stroke="#bdbdbd" stroke-width="0.9"/></g></svg>
<div class="t" id="t61" style="left:297px;top:173px;line-height:16px;font-size:12px;color:#ffffff;transform:scaleX(0.8598);transform-origin:0 50%;">PCC-001-0001-1</div>
<div class="t" id="t62" style="left:404px;top:173px;line-height:16px;font-size:12px;color:#ffffff;transform:scaleX(0.8224);transform-origin:0 50%;">1</div>
<div class="t" id="t63" style="left:495px;top:173px;line-height:16px;font-size:12px;color:#ffffff;transform:scaleX(0.9191);transform-origin:0 50%;">D_Schottky_N</div>
<div class="t" id="t64" style="left:651px;top:173px;line-height:16px;font-size:12px;color:#ffffff;transform:scaleX(0.8828);transform-origin:0 50%;">Schottky Diode Footprint</div>
<div style="left:914px;top:174px;width:14px;height:14px;background:#121110;border:1px solid #0e0e0e;"></div>
<div class="t" id="t65" style="left:938px;top:173px;line-height:16px;font-size:12px;color:#ffffff;transform:scaleX(0.8627);transform-origin:0 50%;">Planned</div>
<svg style="left:269.5px;top:192.5px" width="15.2" height="15.2" viewBox="0 0 16 16"><g transform="rotate(27 8 8)"><path d="M2.6 1.7v12.6M4.8 1.7v12.6M6.9 1.7v12.6M9.1 1.7v12.6M11.2 1.7v12.6M13.4 1.7v12.6" stroke="#222" stroke-width="1.1"/><rect x="1.4" y="3.4" width="13.2" height="9.2" fill="#a2a2a2"/><path d="M3.7 3.6v8.8M5.85 3.6v8.8M8 3.6v8.8M10.15 3.6v8.8M12.3 3.6v8.8" stroke="#7c7c7c" stroke-width="0.9"/><path d="M1.4 6.4h13.2M1.4 9.6h13.2" stroke="#bdbdbd" stroke-width="0.9"/></g></svg>
<div class="t" id="t66" style="left:297px;top:193px;line-height:16px;font-size:12px;color:#e4e4e4;transform:scaleX(0.8586);transform-origin:0 50%;">PCC-00158-1</div>
<div class="t" id="t67" style="left:404px;top:193px;line-height:16px;font-size:12px;color:#e4e4e4;transform:scaleX(0.8224);transform-origin:0 50%;">1</div>
<div class="t" id="t68" style="left:495px;top:193px;line-height:16px;font-size:12px;color:#e4e4e4;transform:scaleX(0.908);transform-origin:0 50%;">D0008A_L</div>
<div class="t" id="t69" style="left:651px;top:193px;line-height:16px;font-size:12px;color:#e4e4e4;transform:scaleX(0.8585);transform-origin:0 50%;">SOIC, 8-Leads, Body 5x4mm, Pitch 1.27mm, IPC Hig...</div>
<div style="left:914px;top:194px;width:14px;height:14px;background:#626262;border:1px solid #0e0e0e;"></div>
<div class="t" id="t70" style="left:938px;top:193px;line-height:16px;font-size:12px;color:#e4e4e4;transform:scaleX(0.8649);transform-origin:0 50%;">Draft</div>
<svg style="left:269.5px;top:212.5px" width="15.2" height="15.2" viewBox="0 0 16 16"><g transform="rotate(27 8 8)"><path d="M2.6 1.7v12.6M4.8 1.7v12.6M6.9 1.7v12.6M9.1 1.7v12.6M11.2 1.7v12.6M13.4 1.7v12.6" stroke="#222" stroke-width="1.1"/><rect x="1.4" y="3.4" width="13.2" height="9.2" fill="#a2a2a2"/><path d="M3.7 3.6v8.8M5.85 3.6v8.8M8 3.6v8.8M10.15 3.6v8.8M12.3 3.6v8.8" stroke="#7c7c7c" stroke-width="0.9"/><path d="M1.4 6.4h13.2M1.4 9.6h13.2" stroke="#bdbdbd" stroke-width="0.9"/></g></svg>
<div class="t" id="t71" style="left:297px;top:213px;line-height:16px;font-size:12px;color:#e4e4e4;transform:scaleX(0.8586);transform-origin:0 50%;">PCC-00159-1</div>
<div class="t" id="t72" style="left:404px;top:213px;line-height:16px;font-size:12px;color:#e4e4e4;transform:scaleX(0.8224);transform-origin:0 50%;">1</div>
<div class="t" id="t73" style="left:495px;top:213px;line-height:16px;font-size:12px;color:#e4e4e4;transform:scaleX(0.9076);transform-origin:0 50%;">D0008A_M</div>
<div class="t" id="t74" style="left:651px;top:213px;line-height:16px;font-size:12px;color:#e4e4e4;transform:scaleX(0.8602);transform-origin:0 50%;">SOIC, 8-Leads, Body 5x4mm, Pitch 1.27mm, IPC Lo...</div>
<div style="left:914px;top:214px;width:14px;height:14px;background:#626262;border:1px solid #0e0e0e;"></div>
<div class="t" id="t75" style="left:938px;top:213px;line-height:16px;font-size:12px;color:#e4e4e4;transform:scaleX(0.8649);transform-origin:0 50%;">Draft</div>
<svg style="left:269.5px;top:232.5px" width="15.2" height="15.2" viewBox="0 0 16 16"><g transform="rotate(27 8 8)"><path d="M2.6 1.7v12.6M4.8 1.7v12.6M6.9 1.7v12.6M9.1 1.7v12.6M11.2 1.7v12.6M13.4 1.7v12.6" stroke="#222" stroke-width="1.1"/><rect x="1.4" y="3.4" width="13.2" height="9.2" fill="#a2a2a2"/><path d="M3.7 3.6v8.8M5.85 3.6v8.8M8 3.6v8.8M10.15 3.6v8.8M12.3 3.6v8.8" stroke="#7c7c7c" stroke-width="0.9"/><path d="M1.4 6.4h13.2M1.4 9.6h13.2" stroke="#bdbdbd" stroke-width="0.9"/></g></svg>
<div class="t" id="t76" style="left:297px;top:233px;line-height:16px;font-size:12px;color:#e4e4e4;transform:scaleX(0.8586);transform-origin:0 50%;">PCC-00160-1</div>
<div class="t" id="t77" style="left:404px;top:233px;line-height:16px;font-size:12px;color:#e4e4e4;transform:scaleX(0.8224);transform-origin:0 50%;">1</div>
<div class="t" id="t78" style="left:495px;top:233px;line-height:16px;font-size:12px;color:#e4e4e4;transform:scaleX(0.9026);transform-origin:0 50%;">D0008A_N</div>
<div class="t" id="t79" style="left:651px;top:233px;line-height:16px;font-size:12px;color:#e4e4e4;transform:scaleX(0.8607);transform-origin:0 50%;">SOIC, 8-Leads, Body 5x4mm, Pitch 1.27mm, IPC Me...</div>
<div style="left:914px;top:234px;width:14px;height:14px;background:#626262;border:1px solid #0e0e0e;"></div>
<div class="t" id="t80" style="left:938px;top:233px;line-height:16px;font-size:12px;color:#e4e4e4;transform:scaleX(0.8649);transform-origin:0 50%;">Draft</div>
<svg style="left:269.5px;top:252.5px" width="15.2" height="15.2" viewBox="0 0 16 16"><g transform="rotate(27 8 8)"><path d="M2.6 1.7v12.6M4.8 1.7v12.6M6.9 1.7v12.6M9.1 1.7v12.6M11.2 1.7v12.6M13.4 1.7v12.6" stroke="#222" stroke-width="1.1"/><rect x="1.4" y="3.4" width="13.2" height="9.2" fill="#a2a2a2"/><path d="M3.7 3.6v8.8M5.85 3.6v8.8M8 3.6v8.8M10.15 3.6v8.8M12.3 3.6v8.8" stroke="#7c7c7c" stroke-width="0.9"/><path d="M1.4 6.4h13.2M1.4 9.6h13.2" stroke="#bdbdbd" stroke-width="0.9"/></g></svg>
<div class="t" id="t81" style="left:297px;top:253px;line-height:16px;font-size:12px;color:#e4e4e4;transform:scaleX(0.8586);transform-origin:0 50%;">PCC-00161-1</div>
<div class="t" id="t82" style="left:404px;top:253px;line-height:16px;font-size:12px;color:#e4e4e4;transform:scaleX(0.8224);transform-origin:0 50%;">1</div>
<div class="t" id="t83" style="left:495px;top:253px;line-height:16px;font-size:12px;color:#e4e4e4;transform:scaleX(0.9044);transform-origin:0 50%;">D0014A_V</div>
<div class="t" id="t84" style="left:651px;top:253px;line-height:16px;font-size:12px;color:#e4e4e4;transform:scaleX(0.8672);transform-origin:0 50%;">SOIC, 14-Leads, Body 8.75x4mm, Pitch 1.27mm</div>
<div style="left:914px;top:254px;width:14px;height:14px;background:#626262;border:1px solid #0e0e0e;"></div>
<div class="t" id="t85" style="left:938px;top:253px;line-height:16px;font-size:12px;color:#e4e4e4;transform:scaleX(0.8649);transform-origin:0 50%;">Draft</div>
<svg style="left:269.5px;top:272.5px" width="15.2" height="15.2" viewBox="0 0 16 16"><g transform="rotate(27 8 8)"><path d="M2.6 1.7v12.6M4.8 1.7v12.6M6.9 1.7v12.6M9.1 1.7v12.6M11.2 1.7v12.6M13.4 1.7v12.6" stroke="#222" stroke-width="1.1"/><rect x="1.4" y="3.4" width="13.2" height="9.2" fill="#a2a2a2"/><path d="M3.7 3.6v8.8M5.85 3.6v8.8M8 3.6v8.8M10.15 3.6v8.8M12.3 3.6v8.8" stroke="#7c7c7c" stroke-width="0.9"/><path d="M1.4 6.4h13.2M1.4 9.6h13.2" stroke="#bdbdbd" stroke-width="0.9"/></g></svg>
<div class="t" id="t86" style="left:297px;top:273px;line-height:16px;font-size:12px;color:#e4e4e4;transform:scaleX(0.8586);transform-origin:0 50%;">PCC-00162-1</div>
<div class="t" id="t87" style="left:404px;top:273px;line-height:16px;font-size:12px;color:#e4e4e4;transform:scaleX(0.8224);transform-origin:0 50%;">1</div>
<div class="t" id="t88" style="left:495px;top:273px;line-height:16px;font-size:12px;color:#e4e4e4;transform:scaleX(0.8992);transform-origin:0 50%;">D0016A_L</div>
<div class="t" id="t89" style="left:651px;top:273px;line-height:16px;font-size:12px;color:#e4e4e4;transform:scaleX(0.8615);transform-origin:0 50%;">SOIC, 16-Leads, Body 10x4mm, Pitch 1.27mm, IPC...</div>
<div style="left:914px;top:274px;width:14px;height:14px;background:#626262;border:1px solid #0e0e0e;"></div>
<div class="t" id="t90" style="left:938px;top:273px;line-height:16px;font-size:12px;color:#e4e4e4;transform:scaleX(0.8649);transform-origin:0 50%;">Draft</div>
<div style="left:246px;top:300px;width:877px;height:250px;background:#3c3c3c;border:1px solid #252525;border-top-color:#3a3a3a;"></div>
<div class="t" id="t91" style="left:564px;top:415.5px;line-height:20px;font-size:15.5px;color:#808080;letter-spacing:-0.22px;">There are no documents to display</div>
<div style="left:256px;top:550px;width:52.5px;height:17.5px;background:#4b4b4b;border:1px solid #272727;border-top:none;border-radius:0 0 5px 5px;"></div>
<div class="t" id="t92" style="left:263px;top:551px;line-height:16px;font-size:11px;color:#f0f0f0;letter-spacing:-0.089px;">Preview</div>
<div style="left:309px;top:550px;width:54px;height:17.5px;background:#3a3a3a;border:1px solid #272727;border-top:none;border-radius:0 0 5px 5px;"></div>
<div class="t" id="t93" style="left:315.1px;top:551px;line-height:16px;font-size:11px;color:#dcdcdc;letter-spacing:-0.144px;">Lifecycle</div>
<div style="left:364px;top:550px;width:56.5px;height:17.5px;background:#3a3a3a;border:1px solid #272727;border-top:none;border-radius:0 0 5px 5px;"></div>
<div class="t" id="t94" style="left:370px;top:551px;line-height:16px;font-size:11px;color:#dcdcdc;letter-spacing:0.316px;">Children</div>
<div style="left:421px;top:550px;width:75.5px;height:17.5px;background:#3a3a3a;border:1px solid #272727;border-top:none;border-radius:0 0 5px 5px;"></div>
<div class="t" id="t95" style="left:426.8px;top:551px;line-height:16px;font-size:11px;color:#dcdcdc;letter-spacing:0.308px;">Where-used</div>
<div style="left:497px;top:550px;width:46px;height:17.5px;background:#3a3a3a;border:1px solid #272727;border-top:none;border-radius:0 0 5px 5px;"></div>
<div class="t" id="t96" style="left:503.3px;top:551px;line-height:16px;font-size:11px;color:#dcdcdc;letter-spacing:0.443px;">Origin</div>
<div style="left:250px;top:285px;width:132px;height:235px;background:#444444;border:1px solid #2a2a2a;box-shadow:2px 2px 4px rgba(0,0,0,0.45);"></div>
<div style="left:251px;top:393px;width:130px;height:24px;background:#5d80a8;"></div>
<div style="left:285px;top:361px;width:96px;height:1px;background:#2b2b2b;"></div>
<div style="left:285px;top:390px;width:96px;height:1px;background:#2b2b2b;"></div>
<div style="left:285px;top:467px;width:96px;height:1px;background:#2b2b2b;"></div>
<div class="t" id="t97" style="left:285px;top:291px;line-height:16px;font-size:11.5px;color:#8c8c8c;letter-spacing:-0.170px;">Place...</div>
<div class="t" id="t98" style="left:285px;top:315px;line-height:16px;font-size:11.5px;color:#e8e8e8;letter-spacing:-0.129px;">Edit...</div>
<div class="t" id="t99" style="left:285px;top:339px;line-height:16px;font-size:11.5px;color:#e8e8e8;letter-spacing:0.052px;">Upload...</div>
<div class="t" id="t100" style="left:285px;top:368px;line-height:16px;font-size:11.5px;color:#e8e8e8;letter-spacing:0.173px;">Operations</div>
<div class="t" id="t101" style="left:285px;top:397px;line-height:16px;font-size:11.5px;color:#ffffff;letter-spacing:0.023px;">Create Item...</div>
<div class="t" id="t102" style="left:285px;top:421px;line-height:16px;font-size:11.5px;color:#e8e8e8;letter-spacing:0.227px;">Move Item...</div>
<div class="t" id="t103" style="left:285px;top:445px;line-height:16px;font-size:11.5px;color:#e8e8e8;letter-spacing:0.044px;">Delete Item...</div>
<div class="t" id="t104" style="left:285px;top:474px;line-height:16px;font-size:11.5px;color:#e8e8e8;letter-spacing:0.248px;">History...</div>
<div class="t" id="t105" style="left:285px;top:498px;line-height:16px;font-size:11.5px;color:#e8e8e8;">Properties...</div>
<svg style="left:367.5px;top:370.8px" width="6" height="9" viewBox="0 0 6 9"><path d="M0.6 0.6l4.4 3.9l-4.4 3.9z" fill="#f4f4f4"/></svg>
<svg style="left:367.5px;top:399.8px" width="6" height="9" viewBox="0 0 6 9"><path d="M0.6 0.6l4.4 3.9l-4.4 3.9z" fill="#f4f4f4"/></svg>
<div style="left:380px;top:391px;width:149px;height:57px;background:#444444;border:1px solid #2a2a2a;box-shadow:2px 2px 4px rgba(0,0,0,0.45);"></div>
<div style="left:381px;top:393px;width:147px;height:24px;background:#5d80a8;"></div>
<div style="left:415px;top:419px;width:113px;height:1px;background:#2b2b2b;"></div>
<svg style="left:386px;top:396.5px" width="17" height="17" viewBox="0 0 17 17"><g transform="rotate(22 8.5 8.5)"><rect x="2.6" y="2.6" width="11.8" height="11.8" fill="#8f8f8f" stroke="#ececec" stroke-width="1.3" stroke-dasharray="1.3 1.2"/><path d="M5.5 4v9M8.5 4v9M11.5 4v9M4 5.5h9M4 8.5h9M4 11.5h9" stroke="#7a7a7a" stroke-width="0.8"/></g></svg>
<div class="t" id="t106" style="left:415px;top:397px;line-height:16px;font-size:11.5px;color:#ffffff;letter-spacing:0.457px;">Footprint</div>
<div class="t" id="t107" style="left:415px;top:426px;line-height:16px;font-size:11.5px;color:#e8e8e8;letter-spacing:0.283px;">Other Item Type</div>
<div style="left:667px;top:331px;width:534px;height:500px;background:#4e4e4e;border:1px solid #181818;"></div>
<div class="t" id="t108" style="left:855.5px;top:336.6px;line-height:20px;font-size:15px;color:#ededed;letter-spacing:-0.103px;">Create New Item</div>
<div style="left:1157px;top:332px;width:36px;height:22px;background:#a30000;"></div>
<svg style="left:1170px;top:338px" width="10" height="10" viewBox="0 0 10 10"><path d="M1.8 1.8l6.4 6.4M8.2 1.8l-6.4 6.4" stroke="#fff" stroke-width="2.1"/></svg>
<div style="left:675px;top:362px;width:518px;height:428px;background:#3f3f3f;border:1px solid #303030;"></div>
<div class="t" id="t109" style="left:683px;top:370px;line-height:16px;font-size:11px;color:#d2d2d2;letter-spacing:-0.086px;">Name</div>
<div style="left:683px;top:389px;width:502px;height:19px;background:#2c2c2c;border:1px solid #303030;border-top-color:#262626;border-radius:4px;box-shadow:inset 0 1px 1px rgba(0,0,0,0.3);"></div>
<div class="t" id="t110" style="left:689px;top:389px;line-height:16px;font-size:11px;color:#ffffff;letter-spacing:0.016px;">D_Schottky_N</div>
<div class="t" id="t111" style="left:683px;top:415px;line-height:16px;font-size:11px;color:#d2d2d2;letter-spacing:0.361px;">Description</div>
<div style="left:683px;top:436px;width:502px;height:64px;background:#2b2b2b;border:1px solid #a9c8e8;"></div>
<div class="t" id="t112" style="left:687px;top:436px;line-height:16px;font-size:11px;color:#ffffff;letter-spacing:0.419px;">Schottky Diode Footprint</div>
<div class="t" id="t113" style="left:683px;top:508px;line-height:16px;font-size:11px;color:#d2d2d2;letter-spacing:0.078px;">Item ID</div>
<div style="left:683px;top:527px;width:247px;height:21px;background:#2c2c2c;border:1px solid #303030;border-top-color:#262626;border-radius:4px;box-shadow:inset 0 1px 1px rgba(0,0,0,0.3);"></div>
<div class="t" id="t114" style="left:689px;top:529.5px;line-height:16px;font-size:11px;color:#ffffff;letter-spacing:-0.281px;">PCC-001-0001</div>
<div class="t" id="t115" style="left:938px;top:508px;line-height:16px;font-size:11px;color:#d2d2d2;letter-spacing:0.189px;">Content Type</div>
<div style="left:938px;top:527px;width:247px;height:21px;background:linear-gradient(#5a5a5a,#454545);border:1px solid #2a2a2a;border-radius:3px;"></div>
<svg style="left:945.7px;top:529.5px" width="17" height="17" viewBox="0 0 17 17"><g transform="rotate(22 8.5 8.5)"><rect x="2.6" y="2.6" width="11.8" height="11.8" fill="#8f8f8f" stroke="#ececec" stroke-width="1.3" stroke-dasharray="1.3 1.2"/><path d="M5.5 4v9M8.5 4v9M11.5 4v9M4 5.5h9M4 8.5h9M4 11.5h9" stroke="#7a7a7a" stroke-width="0.8"/></g></svg>
<div class="t" id="t116" style="left:965.5px;top:530px;line-height:16px;font-size:11px;color:#ffffff;letter-spacing:0.675px;">Footprint</div>
<svg style="left:1171.5px;top:535px" width="10" height="6" viewBox="0 0 10 6"><path d="M0.4 0.6h9.2l-4.6 5z" fill="#f4f4f4"/></svg>
<svg style="left:682.5px;top:562px" width="17" height="16" viewBox="0 0 17 16"><rect x="0.6" y="0.6" width="10.8" height="8.8" fill="#f3ead2" stroke="#c9b078" stroke-width="0.9"/><rect x="2" y="2.2" width="3.2" height="2.6" fill="#4f7fc6"/><path d="M6.2 2.8h4M6.2 4.6h4M2 6.6h8" stroke="#b06a4a" stroke-width="0.9"/><path d="M6 14.6c0.4-3 2.4-4.4 5.4-4.4v-2.4l5 4l-5 4v-2.4c-2.2 0-3.8 0.2-5.4 1.2z" fill="#86bcf4" stroke="#3f3f3f" stroke-width="0.4"/></svg>
<div class="t" id="t117" style="left:702px;top:563px;line-height:16px;font-size:11px;color:#a8bad4;letter-spacing:-0.037px;">Share Item...</div>
<svg style="left:683.5px;top:590px" width="6" height="6" viewBox="0 0 6 6"><path d="M5.6 0.2v5.4h-5.4z" fill="#f4f4f4"/></svg>
<div class="t" id="t118" style="left:693px;top:585px;line-height:16px;font-size:11px;color:#ffffff;font-weight:bold;letter-spacing:-0.072px;">Advanced</div>
<div class="t" id="t119" style="left:683px;top:605px;line-height:16px;font-size:11px;color:#d2d2d2;letter-spacing:0.302px;">Folder</div>
<div style="left:683px;top:627px;width:247px;height:21px;background:#2c2c2c;border:1px solid #303030;border-top-color:#262626;border-radius:4px;box-shadow:inset 0 1px 1px rgba(0,0,0,0.3);"></div>
<div class="t" id="t120" style="left:689px;top:629px;line-height:16px;font-size:11px;color:#ffffff;letter-spacing:0.451px;">Components\Models\Footprints</div>
<svg style="left:911.7px;top:634.8px" width="14" height="4" viewBox="0 0 14 4"><circle cx="1.8" cy="2" r="1.5" fill="#f2f2f2"/><circle cx="7" cy="2" r="1.5" fill="#f2f2f2"/><circle cx="12.2" cy="2" r="1.5" fill="#f2f2f2"/></svg>
<div class="t" id="t121" style="left:938px;top:605px;line-height:16px;font-size:11px;color:#d2d2d2;letter-spacing:0.108px;">Ancestor Revision</div>
<div class="t" id="t122" style="left:1158.5px;top:605px;line-height:16px;font-size:11px;color:#a8bad4;letter-spacing:-0.059px;">Clear</div>
<div style="left:938px;top:627px;width:247px;height:21px;background:#2c2c2c;border:1px solid #303030;border-top-color:#262626;border-radius:4px;box-shadow:inset 0 1px 1px rgba(0,0,0,0.3);"></div>
<svg style="left:1166.7px;top:634.8px" width="14" height="4" viewBox="0 0 14 4"><circle cx="1.8" cy="2" r="1.5" fill="#f2f2f2"/><circle cx="7" cy="2" r="1.5" fill="#f2f2f2"/><circle cx="12.2" cy="2" r="1.5" fill="#f2f2f2"/></svg>
<div class="t" id="t123" style="left:683px;top:654px;line-height:16px;font-size:11px;color:#d2d2d2;letter-spacing:0.065px;">Revision Naming Scheme</div>
<div style="left:683px;top:675px;width:247px;height:21px;background:linear-gradient(#5a5a5a,#454545);border:1px solid #2a2a2a;border-radius:3px;"></div>
<div class="t" id="t124" style="left:689px;top:677px;line-height:16px;font-size:11px;color:#ffffff;letter-spacing:-0.075px;">1-Level Revision Scheme</div>
<svg style="left:898px;top:682px" width="10" height="6" viewBox="0 0 10 6"><path d="M0.4 0.6h9.2l-4.6 5z" fill="#f4f4f4"/></svg>
<svg style="left:912.5px;top:683px" width="14" height="4" viewBox="0 0 14 4"><circle cx="1.8" cy="2" r="1.5" fill="#f2f2f2"/><circle cx="7" cy="2" r="1.5" fill="#f2f2f2"/><circle cx="12.2" cy="2" r="1.5" fill="#f2f2f2"/></svg>
<div class="t" id="t125" style="left:938px;top:654px;line-height:16px;font-size:11px;color:#d2d2d2;letter-spacing:0.023px;">Revision ID</div>
<div style="left:938px;top:675px;width:247px;height:21px;background:#2c2c2c;border:1px solid #303030;border-top-color:#262626;border-radius:4px;box-shadow:inset 0 1px 1px rgba(0,0,0,0.3);"></div>
<div class="t" id="t126" style="left:944.5px;top:677px;line-height:16px;font-size:11px;color:#ffffff;">1</div>
<div class="t" id="t127" style="left:683px;top:704px;line-height:16px;font-size:11px;color:#d2d2d2;letter-spacing:0.239px;">Lifecycle Definition</div>
<div style="left:683px;top:728px;width:247px;height:21px;background:linear-gradient(#5a5a5a,#454545);border:1px solid #2a2a2a;border-radius:3px;"></div>
<div class="t" id="t128" style="left:689px;top:730px;line-height:16px;font-size:11px;color:#ffffff;letter-spacing:-0.051px;">Generic Lifecycle</div>
<svg style="left:898px;top:735px" width="10" height="6" viewBox="0 0 10 6"><path d="M0.4 0.6h9.2l-4.6 5z" fill="#f4f4f4"/></svg>
<svg style="left:912.5px;top:736px" width="14" height="4" viewBox="0 0 14 4"><circle cx="1.8" cy="2" r="1.5" fill="#f2f2f2"/><circle cx="7" cy="2" r="1.5" fill="#f2f2f2"/><circle cx="12.2" cy="2" r="1.5" fill="#f2f2f2"/></svg>
<div style="left:938px;top:728px;width:247px;height:21px;background:#2c2c2c;border:1px solid #303030;border-top-color:#262626;border-radius:4px;box-shadow:inset 0 1px 1px rgba(0,0,0,0.3);"></div>
<div class="t" id="t129" style="left:944px;top:730px;line-height:16px;font-size:11px;color:#ffffff;letter-spacing:0.232px;">Planned</div>
<svg style="left:682.5px;top:759px" width="17" height="16" viewBox="0 0 17 16"><rect x="0.8" y="0.6" width="9.6" height="9" fill="#e9eef8" stroke="#6f93d0" stroke-width="0.9"/><rect x="0.8" y="0.6" width="9.6" height="2.2" fill="#7fa6e0"/><path d="M0.8 5h9.6M0.8 7.3h9.6M4 2.8v6.8M7.2 2.8v6.8" stroke="#7f9fd6" stroke-width="0.8"/><rect x="1.3" y="3.3" width="2.4" height="1.5" fill="#d8504e"/><path d="M6 14.6c0.4-3 2.4-4.4 5.4-4.4v-2.4l5 4l-5 4v-2.4c-2.2 0-3.8 0.2-5.4 1.2z" fill="#86bcf4" stroke="#3f3f3f" stroke-width="0.4"/></svg>
<div class="t" id="t130" style="left:702px;top:760px;line-height:16px;font-size:11px;color:#a8bad4;letter-spacing:-0.016px;">Share Revision...</div>
<div style="left:675px;top:803px;width:16px;height:16px;background:#4b4b4b;border:1px solid #1a1a1a;border-radius:3.5px;"></div>
<svg style="left:678px;top:806px" width="10" height="10" viewBox="678 806 10 10"><path d="M679 810.2l3.7 2.6l4.3-4.9" fill="none" stroke="#ececec" stroke-width="1.2"/></svg>
<div class="t" id="t131" style="left:694.5px;top:803px;line-height:16px;font-size:11.5px;color:#e2e2e2;letter-spacing:0.205px;">Open for editing after creation</div>
<div style="left:1037px;top:798px;width:75px;height:24.5px;background:linear-gradient(#595959,#4c4c4c);border:1px solid #9fc4ea;border-radius:3px;"></div>
<div class="t" id="t132" style="left:1067px;top:802.5px;line-height:16px;font-size:11px;color:#ffffff;letter-spacing:-0.203px;">OK</div>
<div style="left:1118px;top:798px;width:75px;height:24.5px;background:linear-gradient(#595959,#4c4c4c);border:1px solid #242424;border-radius:3px;"></div>
<div class="t" id="t133" style="left:1138px;top:802.5px;line-height:16px;font-size:11px;color:#ffffff;letter-spacing:-0.042px;">Cancel</div>
<svg style="left:0;top:0" width="1201" height="831" viewBox="0 0 1201 831"><path d="M849.5 345.5 L599 199 L604 188.5 L571.5 186.5 L589.5 214 L595 204.5 L846.5 350 Z" fill="#4ef47a"/><rect x="932" y="505" width="256.5" height="56" rx="10" ry="10" fill="none" stroke="#4ef47a" stroke-width="4"/><rect x="380.3" y="389.8" width="110.4" height="36.3" rx="9" ry="9" fill="none" stroke="#f96d10" stroke-width="4.2"/><path d="M492 403.2 L648.5 395.3 L648.5 384.2 L678.2 397.8 L648.5 414 L648.5 403 L492 409.8 Z" fill="#f96d10"/><path d="M468.6 403.3v15.6l3.6-3.4l2.7 6.2l2.4-1l-2.7-6.1h5z" fill="#fff" stroke="#111" stroke-width="1"/></svg>
</body></html>
